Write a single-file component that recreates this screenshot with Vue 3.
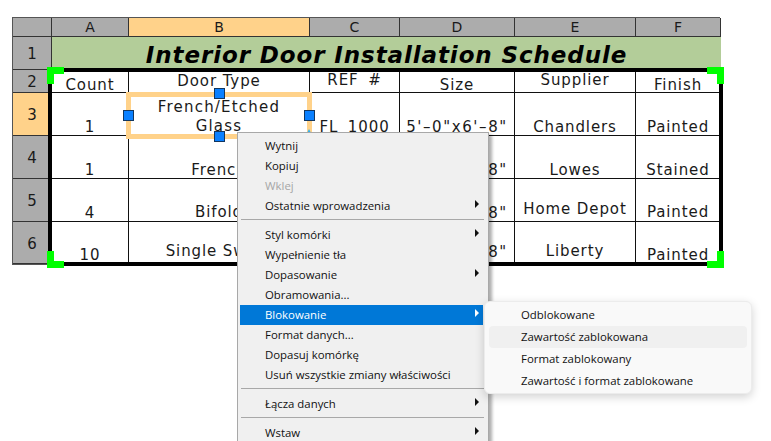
<script setup>
const columns = [
  { label: 'A', active: false },
  { label: 'B', active: true },
  { label: 'C', active: false },
  { label: 'D', active: false },
  { label: 'E', active: false },
  { label: 'F', active: false }
]
const size = '5\'–0"x6\'–8"'
const rows = [
  {
    n: '2', cls: 'r2', cells: [
      ['Count', 'p0'], ['Door Type', 'p4'], ['REF #', 'p5 spaced'], ['Size', 'p0'], ['Supplier', 'p5'], ['Finish', 'p0']
    ]
  },
  {
    n: '3', cls: 'r3', active: true, cells: [
      ['1', 'p1'], ['French/Etched\nGlass', 'wrap'], ['FL 1000', 'p1 spaced'], [size, 'p1 dim'], ['Chandlers', 'p1'], ['Painted', 'p1']
    ]
  },
  {
    n: '4', cls: 'r3', cells: [
      ['1', 'p1'], ['French', 'p1'], ['', 'p1'], [size, 'p1 dim'], ['Lowes', 'p1'], ['Stained', 'p1']
    ]
  },
  {
    n: '5', cls: 'r3', cells: [
      ['4', 'p1'], ['Bifold', 'p2'], ['', 'p1'], [size, 'p1 dim'], ['Home Depot', 'p5'], ['Painted', 'p2']
    ]
  },
  {
    n: '6', cls: 'r6', cells: [
      ['10', 'p1'], ['Single Swing', 'p5'], ['', 'p1'], [size, 'p4 dim'], ['Liberty', 'p5'], ['Painted', 'p1']
    ]
  }
]
const menuGroups = [
  [
    { t: 'Wytnij' }, { t: 'Kopiuj' }, { t: 'Wklej', off: true }, { t: 'Ostatnie wprowadzenia', sub: true }
  ],
  [
    { t: 'Styl komórki', sub: true }, { t: 'Wypełnienie tła' }, { t: 'Dopasowanie', sub: true },
    { t: 'Obramowania...' }, { t: 'Blokowanie', sub: true, on: true }, { t: 'Format danych...' },
    { t: 'Dopasuj komórkę' }, { t: 'Usuń wszystkie zmiany właściwości' }
  ],
  [{ t: 'Łącza danych', sub: true }],
  [{ t: 'Wstaw', sub: true }]
]
const subItems = [
  { t: 'Odblokowane' },
  { t: 'Zawartość zablokowana', hover: true },
  { t: 'Format zablokowany' },
  { t: 'Zawartość i format zablokowane' }
]
</script>

<template>
  <div class="page">
    <div class="sheet">
      <div class="grid">
        <div class="hd corner"></div>
        <div v-for="c in columns" :key="c.label" class="hd col" :class="{ act: c.active }">{{ c.label }}</div>

        <div class="hd rowhd r1">1</div>
        <div class="title">Interior Door Installation Schedule</div>

        <template v-for="r in rows" :key="r.n">
          <div class="hd rowhd" :class="[r.cls, { act: r.active }]">{{ r.n }}</div>
          <div v-for="(c, i) in r.cells" :key="i" class="cell" :class="[r.cls, c[1]]">{{ c[0] }}</div>
        </template>
      </div>

      <div class="frame"></div>
      <div class="corner-g tl"></div>
      <div class="corner-g tr"></div>
      <div class="corner-g bl"></div>
      <div class="corner-g br"></div>

      <div class="selection"></div>
      <div class="grip g-top"></div>
      <div class="grip g-left"></div>
      <div class="grip g-right"></div>
      <div class="grip g-bottom"></div>
      <div class="tick"></div>
    </div>

    <div class="menu">
      <template v-for="(g, gi) in menuGroups" :key="gi">
        <div v-if="gi" class="sep"></div>
        <div v-for="m in g" :key="m.t" class="item" :class="{ off: m.off, on: m.on }">
          <span>{{ m.t }}</span>
          <i v-if="m.sub" class="arrow"></i>
        </div>
      </template>
    </div>

    <div class="submenu">
      <div v-for="s in subItems" :key="s.t" class="sub-item" :class="{ hover: s.hover }">{{ s.t }}</div>
    </div>
  </div>
</template>

<style scoped>
.page {
  position: relative;
  width: 771px;
  height: 441px;
  overflow: hidden;
  background: #fff;
  font-family: "Open Sans", "Liberation Sans", sans-serif;
}
.sheet {
  position: relative;
  padding: 17px 0 0 12px;
}
.grid {
  display: grid;
  grid-template-columns: 39px 77px 181px 90px 115px 121px 85px;
  width: 708px;
  border: 1px solid #555;
  box-sizing: border-box;
  font-family: "DejaVu Sans", sans-serif;
  color: #1a1a1a;
  font-size: 15px;
}
.hd {
  display: flex;
  align-items: center;
  justify-content: center;
  background: #acacac;
  border-right: 1px solid #333;
  border-bottom: 1px solid #333;
  box-sizing: border-box;
}
.col {
  height: 19px;
  font-size: 14px;
}
.corner {
  height: 19px;
}
.act {
  background: #ffd28a;
}
.rowhd {
  font-size: 15px;
  padding-top: 2px;
}
.r1 { height: 33px; }
.r2 { height: 23px; }
.r3 { height: 43px; }
.r6 { height: 42px; }
.title {
  grid-column: 2 / 8;
  height: 33px;
  background: #b3cd99;
  color: #000;
  font-family: "DejaVu Sans", sans-serif;
  font-weight: 700;
  font-style: italic;
  font-size: 23px;
  letter-spacing: 0.9px;
  display: flex;
  align-items: center;
  justify-content: center;
  padding-top: 2px;
  box-sizing: border-box;
}
.cell {
  display: flex;
  align-items: flex-end;
  justify-content: center;
  text-align: center;
  white-space: pre-line;
  letter-spacing: 0.9px;
  line-height: 14px;
  border-right: 1px solid #111;
  border-bottom: 1px solid #111;
  box-sizing: border-box;
  background: #fff;
}
.p0 { padding-bottom: 0; }
.p1 { padding-bottom: 1px; }
.p2 { padding-bottom: 2px; }
.p4 { padding-bottom: 4px; }
.p5 { padding-bottom: 5px; }
.wrap {
  align-items: flex-start;
  padding-top: 5px;
  line-height: 19px;
  letter-spacing: 1.2px;
}
.spaced { word-spacing: 4px; }
.dim { letter-spacing: 1.6px; }

.frame {
  position: absolute;
  left: 48px;
  top: 68px;
  width: 675px;
  height: 198px;
  border: 4px solid #000;
  box-sizing: border-box;
  pointer-events: none;
}
.corner-g {
  position: absolute;
  width: 17px;
  height: 17px;
  border: 0 solid #00ff00;
  box-sizing: border-box;
}
.tl { left: 47px; top: 67px; border-width: 7px 0 0 7px; }
.tr { left: 707px; top: 67px; border-width: 7px 7px 0 0; }
.bl { left: 47px; top: 251px; border-width: 0 0 7px 7px; }
.br { left: 707px; top: 251px; border-width: 0 7px 7px 0; }

.selection {
  position: absolute;
  left: 126px;
  top: 92px;
  width: 186px;
  height: 47px;
  border: 5px solid #ffd28a;
  box-sizing: border-box;
}
.grip {
  position: absolute;
  width: 11px;
  height: 11px;
  background: #0a80ff;
  border: 1px solid #12365e;
  box-sizing: border-box;
}
.g-top { left: 214px; top: 88px; }
.g-left { left: 123px; top: 110px; }
.g-right { left: 304px; top: 110px; }
.g-bottom { left: 214px; top: 131px; }
.tick {
  position: absolute;
  left: 307px;
  top: 129px;
  width: 0;
  height: 0;
  border: 2.5px solid transparent;
  border-top: 0;
  border-bottom: 4px solid #2eb2f0;
}

.menu {
  position: absolute;
  left: 237px;
  top: 132px;
  width: 252px;
  height: 320px;
  padding: 3px 5px 0 2px;
  box-sizing: border-box;
  background: #f0f0f0;
  border: 1px solid #a8a8a8;
  box-shadow: 3px 3px 3px rgba(0, 0, 0, 0.32);
  font-size: 11.4px;
  color: #111;
}
.item {
  position: relative;
  display: flex;
  align-items: flex-start;
  justify-content: space-between;
  height: 20px;
  line-height: 20px;
  padding: 0 4px 0 25px;
  white-space: nowrap;
}
.item.off { color: #a6a6a6; }
.item.on {
  background: #0078d7;
  color: #fff;
}
.arrow {
  width: 0;
  height: 0;
  margin-top: 4px;
  border-top: 4px solid transparent;
  border-bottom: 4px solid transparent;
  border-left: 4px solid #111;
}
.item.on .arrow { border-left-color: #fff; }
.sep {
  height: 1px;
  margin: 3px -1px 5px 1px;
  background: #a8a8a8;
}

.submenu {
  position: absolute;
  left: 484px;
  top: 301px;
  width: 268px;
  height: 93px;
  padding: 2px 4px;
  box-sizing: border-box;
  background: #f9f9f9;
  border: 1px solid #ececec;
  border-radius: 6px;
  box-shadow: 0 3px 10px rgba(0, 0, 0, 0.18);
  font-size: 11.4px;
  color: #111;
}
.sub-item {
  height: 22px;
  line-height: 22px;
  padding-left: 32px;
  border-radius: 4px;
  white-space: nowrap;
}
.sub-item.hover { background: #f0f0f0; }
</style>
